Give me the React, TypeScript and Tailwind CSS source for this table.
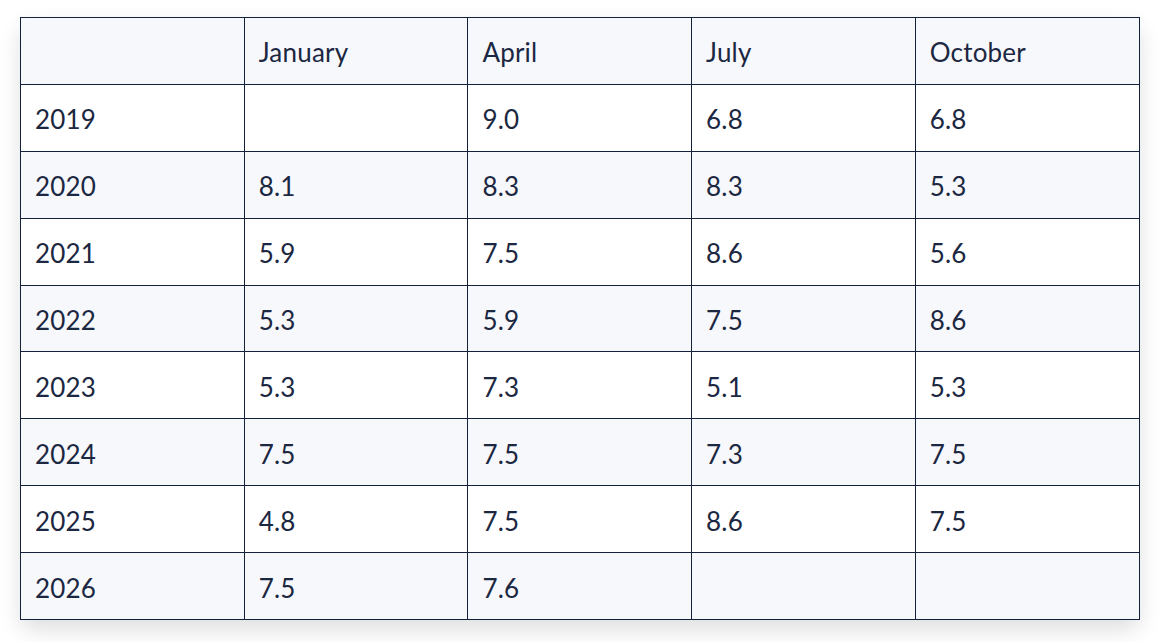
const months = ['January', 'April', 'July', 'October'];

const rows: { year: string; values: string[] }[] = [
  { year: '2019', values: ['', '9.0', '6.8', '6.8'] },
  { year: '2020', values: ['8.1', '8.3', '8.3', '5.3'] },
  { year: '2021', values: ['5.9', '7.5', '8.6', '5.6'] },
  { year: '2022', values: ['5.3', '5.9', '7.5', '8.6'] },
  { year: '2023', values: ['5.3', '7.3', '5.1', '5.3'] },
  { year: '2024', values: ['7.5', '7.5', '7.3', '7.5'] },
  { year: '2025', values: ['4.8', '7.5', '8.6', '7.5'] },
  { year: '2026', values: ['7.5', '7.6', '', ''] },
];

const cell =
  'border border-[#14213d] pl-[14px] pr-[10px] pt-[3px] h-[66.9px] text-left align-middle font-normal';

const App = () => {
  return (
    <div className="min-h-screen bg-white pt-[17px] pl-[20px] font-['Lato','Liberation_Sans',sans-serif] text-[#1c2741]">
      <div className="w-[1119.5px] rounded-xl bg-white shadow-[0_10px_22px_rgba(0,0,0,0.13)]">
        <table className="w-[1119.5px] border-collapse table-fixed text-[26px] leading-none tracking-[0.2px]">
          <thead>
            <tr className="bg-[#f6f8fc]">
              <th className={cell}></th>
              {months.map((m) => (
                <th key={m} className={cell}>
                  {m}
                </th>
              ))}
            </tr>
          </thead>
          <tbody>
            {rows.map((row, i) => (
              <tr key={row.year} className={i % 2 === 1 ? 'bg-[#f6f8fc]' : 'bg-white'}>
                <td className={cell}>{row.year}</td>
                {row.values.map((v, j) => (
                  <td key={j} className={cell}>
                    {v}
                  </td>
                ))}
              </tr>
            ))}
          </tbody>
        </table>
      </div>
    </div>
  );
};

export default App;
